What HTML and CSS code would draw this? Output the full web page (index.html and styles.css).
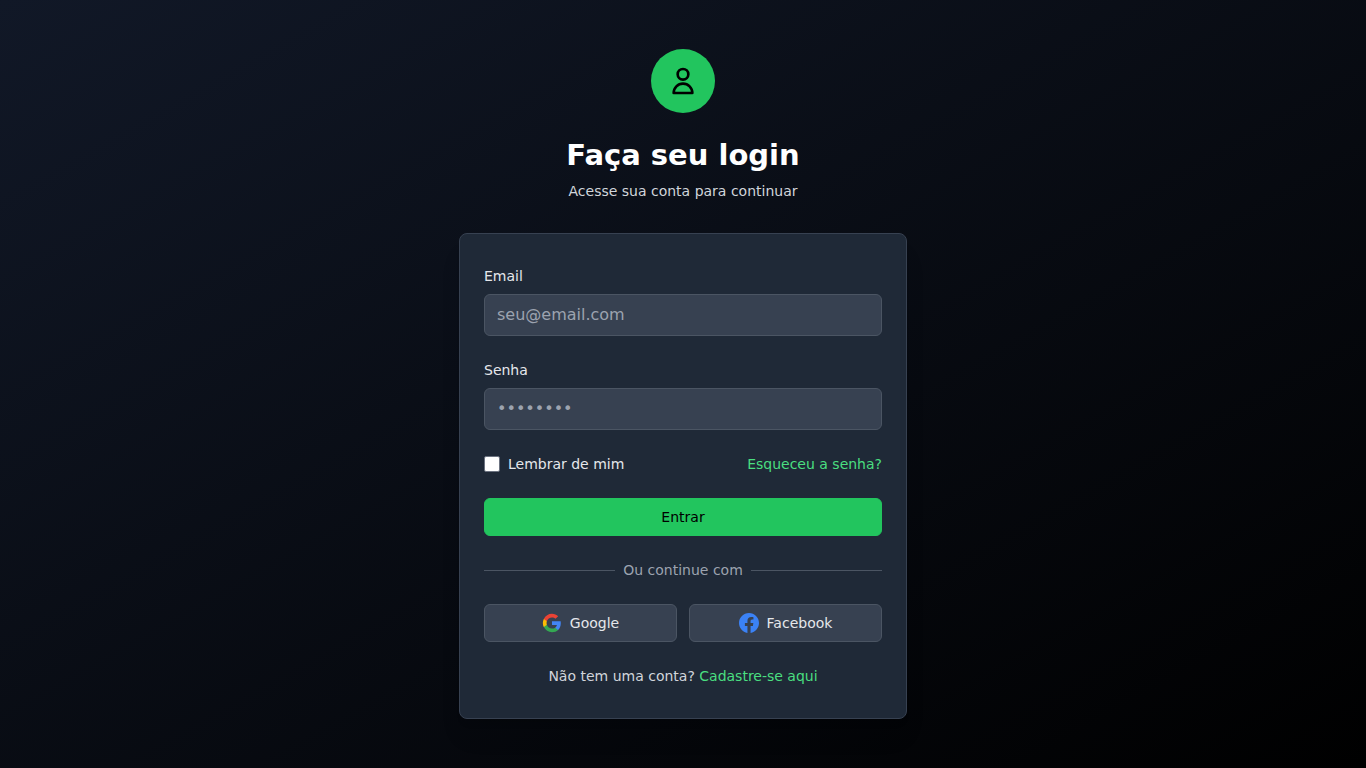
FILE: index.html
```html
<!DOCTYPE html>
<html lang="pt-BR">
<head>
<meta charset="utf-8">
<meta name="viewport" content="width=device-width, initial-scale=1">
<title>Faça seu login</title>
<link rel="stylesheet" href="styles.css">
</head>
<body>
<main class="page">
  <header class="intro">
    <div class="avatar">
      <svg class="avatar-icon" viewBox="0 0 24 24" fill="none" stroke="currentColor" stroke-width="2" stroke-linecap="round" stroke-linejoin="round" aria-hidden="true">
        <path d="M16 7a4 4 0 11-8 0 4 4 0 018 0zM12 14a7 7 0 00-7 7h14a7 7 0 00-7-7z"/>
      </svg>
    </div>
    <h1 class="title">Faça seu login</h1>
    <p class="subtitle">Acesse sua conta para continuar</p>
  </header>

  <section class="card">
    <form class="form">
      <div class="field">
        <label class="label" for="email">Email</label>
        <input class="input" id="email" name="email" type="email" autocomplete="email" placeholder="seu@email.com">
      </div>
      <div class="field">
        <label class="label" for="password">Senha</label>
        <input class="input" id="password" name="password" type="password" autocomplete="current-password" placeholder="••••••••">
      </div>
      <div class="options">
        <div class="remember">
          <input class="checkbox" id="remember" name="remember" type="checkbox">
          <label for="remember">Lembrar de mim</label>
        </div>
        <a class="link" href="#">Esqueceu a senha?</a>
      </div>
      <button class="button button-primary" type="submit">Entrar</button>
    </form>

    <div class="divider">Ou continue com</div>

    <div class="socials">
      <button class="button button-social" type="button">
        <svg class="social-icon" viewBox="0 0 24 24" aria-hidden="true">
          <path fill="#4285F4" d="M22.56 12.25c0-.78-.07-1.53-.2-2.25H12v4.26h5.92c-.26 1.37-1.04 2.53-2.21 3.31v2.77h3.57c2.08-1.92 3.28-4.74 3.28-8.09z"/>
          <path fill="#34A853" d="M12 23c2.97 0 5.46-.98 7.28-2.66l-3.57-2.77c-.98.66-2.23 1.06-3.71 1.06-2.86 0-5.29-1.93-6.16-4.53H2.18v2.84C3.99 20.53 7.7 23 12 23z"/>
          <path fill="#FBBC05" d="M5.84 14.09c-.22-.66-.35-1.36-.35-2.09s.13-1.43.35-2.09V7.07H2.18C1.43 8.55 1 10.22 1 12s.43 3.45 1.18 4.93l2.85-2.22.81-.62z"/>
          <path fill="#EA4335" d="M12 5.38c1.62 0 3.06.56 4.21 1.64l3.15-3.15C17.45 2.09 14.97 1 12 1 7.7 1 3.99 3.47 2.18 7.07l3.66 2.84c.87-2.6 3.3-4.53 6.16-4.53z"/>
        </svg>
        Google
      </button>
      <button class="button button-social" type="button">
        <svg class="social-icon facebook" viewBox="0 0 24 24" fill="currentColor" aria-hidden="true">
          <path d="M24 12.073c0-6.627-5.373-12-12-12s-12 5.373-12 12c0 5.99 4.388 10.954 10.125 11.854v-8.385H7.078v-3.47h3.047V9.43c0-3.007 1.792-4.669 4.533-4.669 1.312 0 2.686.235 2.686.235v2.953H15.83c-1.491 0-1.956.925-1.956 1.874v2.25h3.328l-.532 3.47h-2.796v8.385C19.612 23.027 24 18.062 24 12.073z"/>
        </svg>
        Facebook
      </button>
    </div>

    <p class="signup">Não tem uma conta? <a class="link" href="#">Cadastre-se aqui</a></p>
  </section>
</main>
</body>
</html>
```
FILE: styles.css
```css
*, *::before, *::after {
  box-sizing: border-box;
}

body {
  margin: 0;
  font-family: "DejaVu Sans", sans-serif;
  font-size: 14px;
  line-height: 20px;
  color: #e5e7eb;
}

h1, p {
  margin: 0;
}

.page {
  display: flex;
  flex-direction: column;
  align-items: center;
  justify-content: center;
  gap: 32px;
  min-height: 100vh;
  padding: 48px 16px;
  background: linear-gradient(to bottom right, #111827, #000);
}

.intro {
  display: flex;
  flex-direction: column;
  align-items: center;
  text-align: center;
}

.avatar {
  display: flex;
  align-items: center;
  justify-content: center;
  width: 64px;
  height: 64px;
  border-radius: 50%;
  background: #22c55e;
  color: #000;
}

.avatar-icon {
  width: 32px;
  height: 32px;
}

.title {
  margin-top: 24px;
  font-size: 29px;
  line-height: 36px;
  font-weight: 700;
  color: #fff;
}

.subtitle {
  margin-top: 8px;
  color: #d1d5db;
}

.card {
  display: flex;
  flex-direction: column;
  gap: 24px;
  width: 100%;
  max-width: 448px;
  padding: 32px 24px;
  border: 1px solid #374151;
  border-radius: 8px;
  background: #1f2937;
  box-shadow: 0 20px 25px -5px rgba(0, 0, 0, 0.1), 0 8px 10px -6px rgba(0, 0, 0, 0.1);
}

.form {
  display: flex;
  flex-direction: column;
  gap: 24px;
}

.field {
  display: flex;
  flex-direction: column;
  gap: 8px;
}

.input {
  width: 100%;
  padding: 8px 12px;
  border: 1px solid #4b5563;
  border-radius: 6px;
  background: #374151;
  color: #fff;
  font-family: inherit;
  font-size: 16px;
  line-height: 24px;
}

.input::placeholder {
  color: #9ca3af;
}

.options {
  display: flex;
  align-items: center;
  justify-content: space-between;
}

.remember {
  display: flex;
  align-items: center;
  gap: 8px;
}

.checkbox {
  appearance: none;
  width: 16px;
  height: 16px;
  margin: 0;
  border: 1px solid #6b7280;
  border-radius: 2px;
  background: #fff;
}

.checkbox:checked {
  background: #22c55e;
}

.link {
  color: #4ade80;
  text-decoration: none;
}

.button {
  display: flex;
  align-items: center;
  justify-content: center;
  gap: 8px;
  padding: 8px 16px;
  border: 1px solid transparent;
  border-radius: 6px;
  font: inherit;
  cursor: pointer;
}

.button-primary {
  border-color: #22c55e;
  background: #22c55e;
  color: #000;
}

.button-social {
  border-color: #4b5563;
  background: #374151;
  color: #e5e7eb;
}

.social-icon {
  width: 20px;
  height: 20px;
}

.facebook {
  color: #3b82f6;
}

.divider {
  display: flex;
  align-items: center;
  gap: 8px;
  color: #9ca3af;
}

.divider::before,
.divider::after {
  content: "";
  flex: 1;
  height: 1px;
  background: #4b5563;
}

.socials {
  display: grid;
  grid-template-columns: 1fr 1fr;
  gap: 12px;
}

.signup {
  text-align: center;
  color: #d1d5db;
}
```
